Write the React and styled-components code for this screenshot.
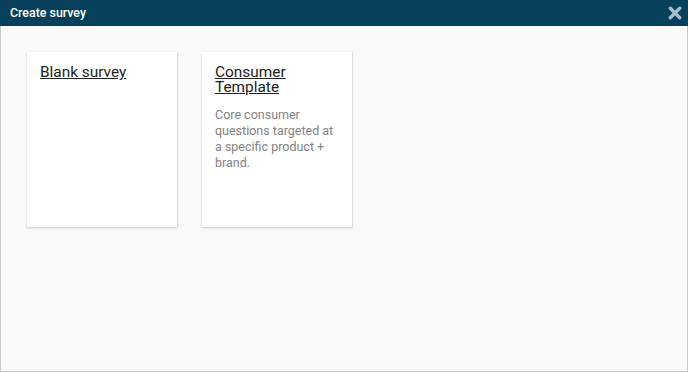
import React from "react";
import styled, { createGlobalStyle } from "styled-components";

const GlobalStyle = createGlobalStyle`
    html, body {
        margin: 0;
        padding: 0;
        background: #fff;
    }
    body {
        font-family: Roboto, "Liberation Sans", Arial, sans-serif;
    }
`;

const Modal = styled.div`
    width: 688px;
    height: 372px;
    box-sizing: border-box;
    display: flex;
    flex-direction: column;
`;

const Header = styled.div`
    height: 26px;
    background-color: #07405a;
    display: flex;
    align-items: center;
    justify-content: space-between;
    padding: 0 6px 0 10px;
    flex-shrink: 0;
`;

const HeaderTitle = styled.h1`
    margin: 0;
    font-size: 12.4px;
    font-weight: 500;
    color: #fff;
    line-height: 1;
`;

const CloseButton = styled.button`
    border: none;
    background: transparent;
    padding: 0;
    width: 15px;
    height: 15px;
    display: flex;
    align-items: center;
    justify-content: center;
    cursor: pointer;
`;

const Body = styled.div`
    flex: 1;
    background-color: #f9f9f9;
    border: 1px solid #c9c9c9;
    border-top: none;
    padding: 26px 26px;
    display: flex;
    align-items: flex-start;
    gap: 25px;
`;

const Card = styled.div`
    width: 150px;
    height: 175px;
    box-sizing: border-box;
    background-color: #fff;
    padding: 13px 13px;
    box-shadow: 0 1px 2px rgba(0,0,0,.18), 1px 0 1px rgba(0,0,0,.06);
    cursor: pointer;
`;

const CardTitle = styled.a`
    display: block;
    font-size: 15.4px;
    line-height: 15px;
    color: #222;
    text-decoration: underline;
    margin: 0;
`;

const CardText = styled.p`
    margin: 12px 0 0;
    font-size: 12.5px;
    line-height: 16px;
    color: #838383;
`;

const CloseIcon = () => (
    <svg width="14" height="14" viewBox="0 0 14 14">
        <path d="M2.3 2.3 L11.7 11.7 M11.7 2.3 L2.3 11.7" stroke="#a7bdc9" strokeWidth="3.4" strokeLinecap="round" />
    </svg>
);

const templates = [
    { title: "Blank survey", text: null },
    { title: "Consumer Template", text: "Core consumer questions targeted at a specific product + brand." },
];

export default function App() {
    return (
        <>
            <GlobalStyle />
            <Modal>
                <Header>
                    <HeaderTitle>Create survey</HeaderTitle>
                    <CloseButton aria-label="Close"><CloseIcon /></CloseButton>
                </Header>
                <Body>
                    {templates.map((t) => (
                        <Card key={t.title}>
                            <CardTitle>{t.title}</CardTitle>
                            {t.text && <CardText>{t.text}</CardText>}
                        </Card>
                    ))}
                </Body>
            </Modal>
        </>
    );
}
